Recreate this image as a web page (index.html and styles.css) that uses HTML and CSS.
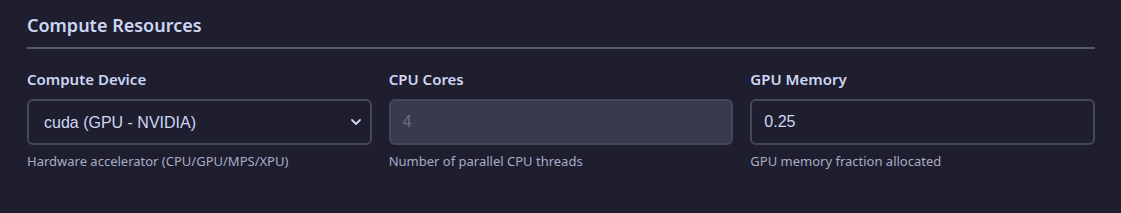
FILE: index.html
```html
<!DOCTYPE html>
<html lang="en">
<head>
  <meta charset="UTF-8" />
  <title>Compute Resources</title>
  <link rel="stylesheet" href="styles.css">
</head>
<body>
  <section class="settings-section">
    <h2 class="section-title">Compute Resources</h2>
    <div class="field-grid">
      <div class="field">
        <label class="field-label" for="device">Compute Device</label>
        <div class="select-wrap">
          <select id="device" class="field-input">
            <option>cuda (GPU - NVIDIA)</option>
            <option>cpu</option>
            <option>mps</option>
            <option>xpu</option>
          </select>
          <!-- chevron over the select -->
          <svg class="chevron" width="10" height="6" viewBox="0 0 10 6">
            <path d="M1 1l4 4 4-4" fill="none" stroke="#cdd6f4" stroke-width="1.8" stroke-linecap="round" stroke-linejoin="round" />
          </svg>
        </div>
        <div class="field-help">Hardware accelerator (CPU/GPU/MPS/XPU)</div>
      </div>
      <div class="field">
        <label class="field-label" for="cores">CPU Cores</label>
        <input id="cores" class="field-input" type="text" value="4" disabled />
        <div class="field-help">Number of parallel CPU threads</div>
      </div>
      <div class="field">
        <label class="field-label" for="gpumem">GPU Memory</label>
        <input id="gpumem" class="field-input" type="text" value="0.25" />
        <div class="field-help">GPU memory fraction allocated</div>
      </div>
    </div>
  </section>
</body>
</html>
```

FILE: styles.css
```css
body {
  margin: 0;
  background-color: #1e1e2e;
  color: #cdd6f4;
  font-family: "Noto Sans", "Open Sans", sans-serif;
}

.settings-section {
  padding: 12px 26px 0 27px;
}

.section-title {
  margin: 0 0 20px;
  padding-bottom: 9px;
  font-size: 18px;
  font-weight: 600;
  line-height: 26px;
  color: #cdd6f4;
  border-bottom: 2px solid #585b70;
}

.field-grid {
  display: grid;
  grid-template-columns: repeat(3, 1fr);
  column-gap: 17px;
}

.field {
  display: flex;
  flex-direction: column;
}

.field-label {
  font-size: 15px;
  font-weight: 600;
  line-height: 20px;
  margin-bottom: 10px;
}

.select-wrap {
  position: relative;
}

.field-input {
  box-sizing: border-box;
  width: 100%;
  height: 46px;
  margin: 0;
  padding: 0 12px;
  background-color: #1e1e2e;
  color: #cdd6f4;
  border: 2px solid #45475a;
  border-radius: 6px;
  font-family: "Liberation Sans", Arial, sans-serif;
  font-size: 16px;
  outline: none;
}

select.field-input {
  appearance: none;
  -webkit-appearance: none;
  padding-left: 15px;
}

.field-input:disabled {
  background-color: #393a4f;
  color: #6c6f85;
  border-color: #45475a;
}

.chevron {
  position: absolute;
  right: 11px;
  top: 20px;
  pointer-events: none;
}

.field-help {
  margin-top: 8px;
  font-size: 13px;
  line-height: 17px;
  color: #a6adc8;
}
```
